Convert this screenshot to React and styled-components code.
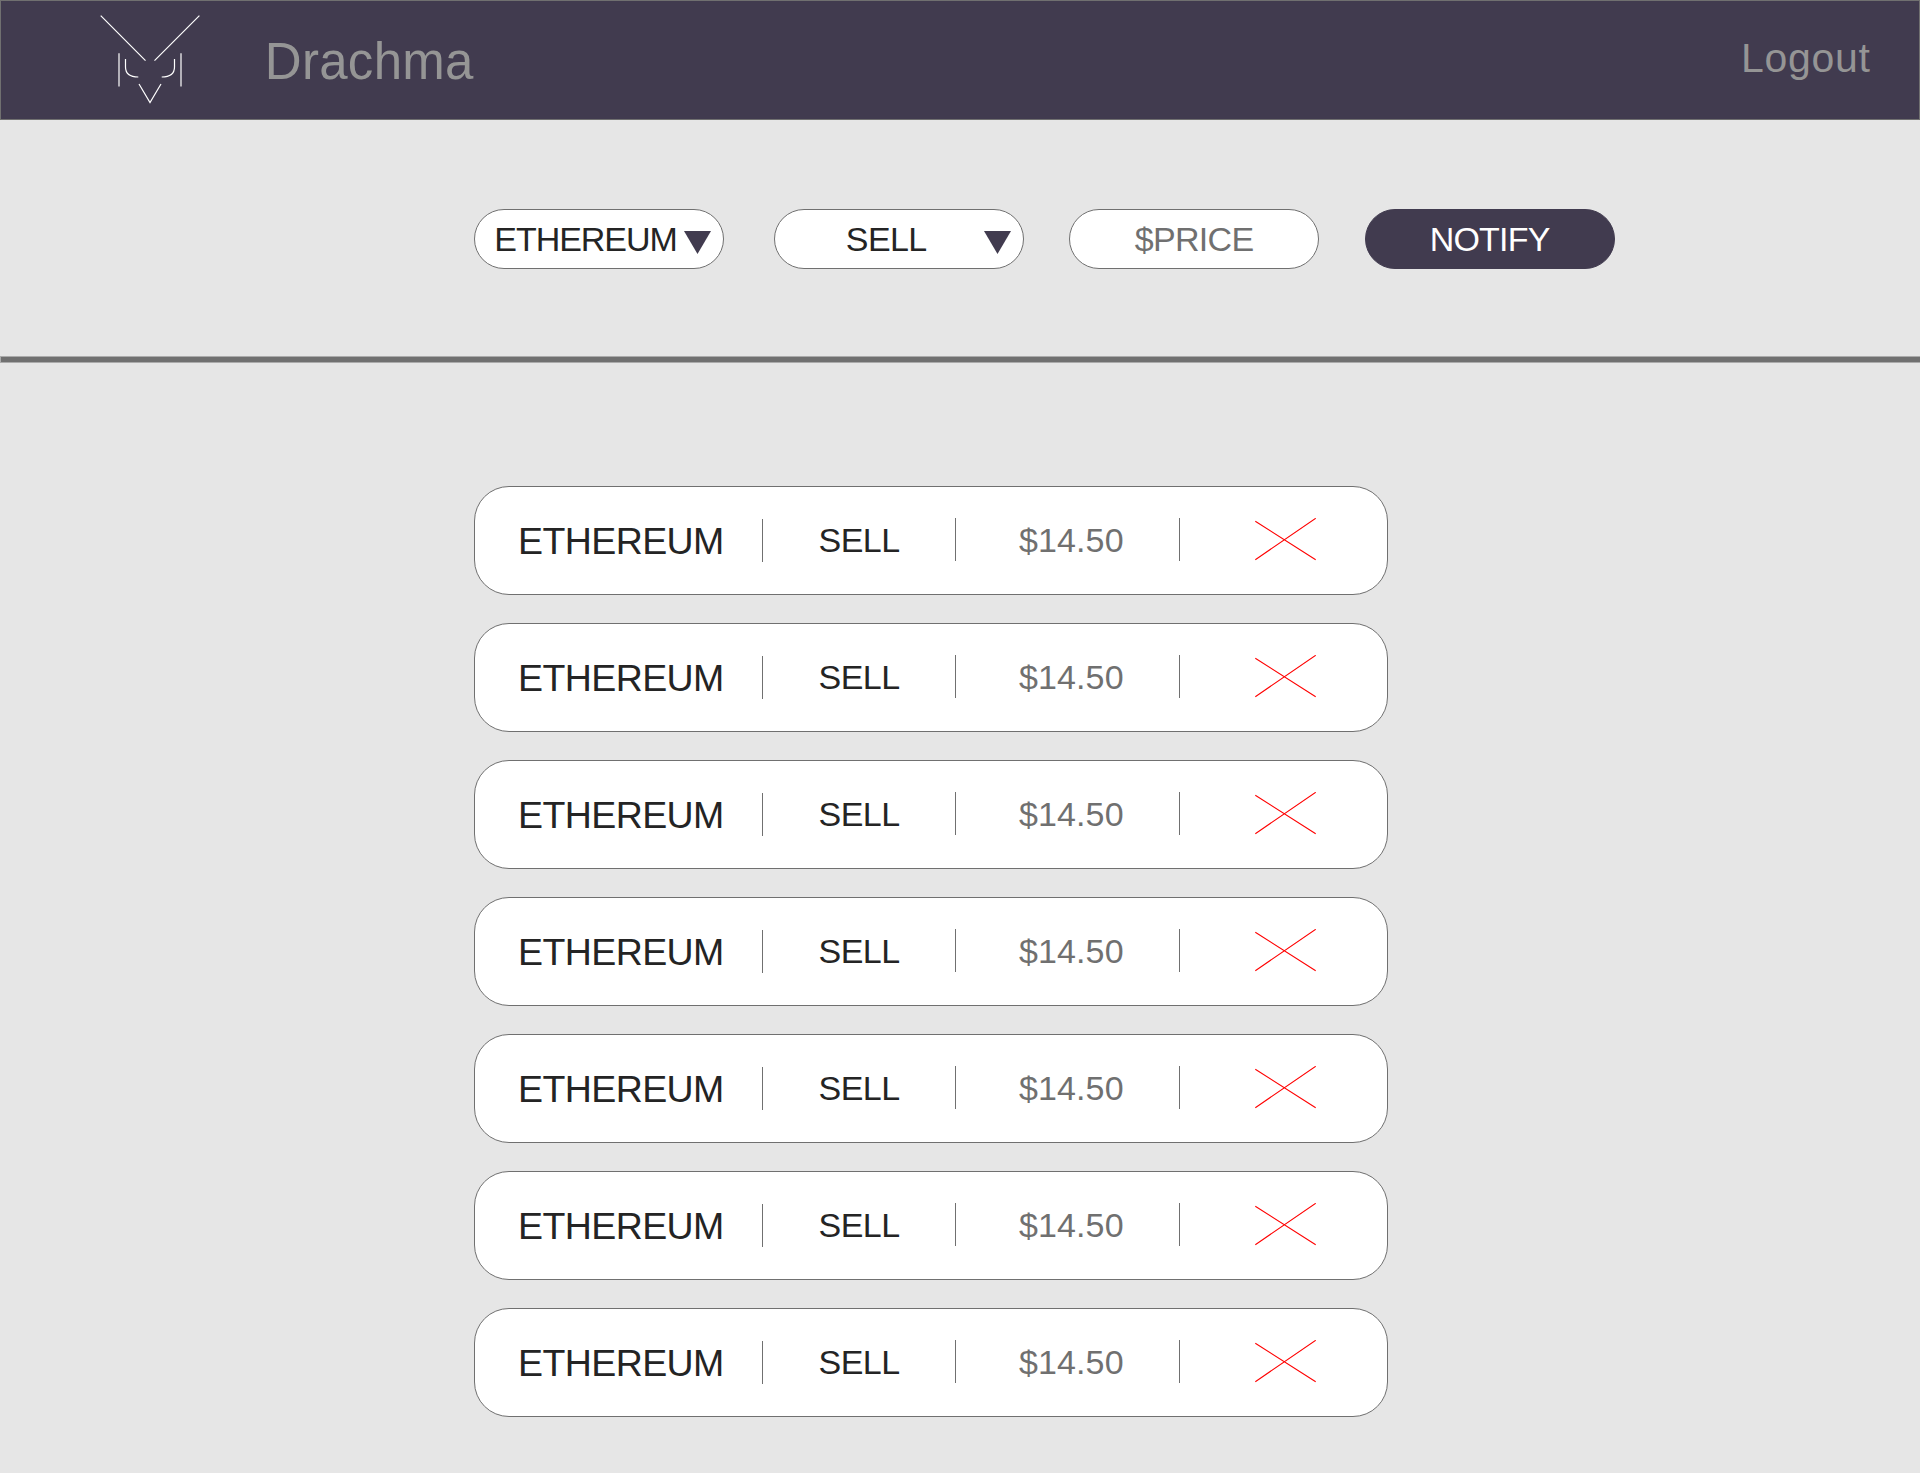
import React from "react";
import styled, { createGlobalStyle } from "styled-components";

const GlobalStyle = createGlobalStyle`
  *, *::before, *::after { box-sizing: border-box; }
  body {
    margin: 0;
    background: #e6e6e6;
    font-family: "Liberation Sans", Arial, sans-serif;
    color: #242424;
  }
  button {
    margin: 0;
    font: inherit;
    text-align: left;
    cursor: pointer;
  }
`;

const Page = styled.div`
  min-height: 1473px;
  background: #e6e6e6;
`;

const Header = styled.header`
  display: flex;
  align-items: center;
  height: 120px;
  padding: 0 48.5px 0 99px;
  background: #413b4f;
  border: 1px solid #707070;
  color: #959595;
`;

const Logo = styled.svg`
  display: block;
  width: 100px;
  height: 90px;
  fill: none;
  stroke: #fff;
  stroke-width: 1.2;
`;

const Brand = styled.h1`
  margin: 3px 0 0 64.8px;
  font-size: 51px;
  font-weight: 400;
  line-height: 60px;
  letter-spacing: 0.3px;
`;

const Logout = styled.a`
  margin: 0 0 4px auto;
  font-size: 41px;
  line-height: 48px;
  letter-spacing: 0.7px;
`;

const AlertForm = styled.section`
  display: flex;
  align-items: flex-start;
  height: 236px;
  padding: 89px 0 0 474px;
`;

const Pill = styled.button`
  display: flex;
  align-items: center;
  flex: none;
  width: 250px;
  height: 60px;
  margin-right: ${(p) => p.$gap || 0}px;
  padding: 0 12px 0 ${(p) => p.$inset}px;
  border: 1px solid ${(p) => (p.$filled ? "#413b4f" : "#707070")};
  border-radius: 30px;
  background: ${(p) => (p.$filled ? "#413b4f" : "#fff")};
  color: ${(p) => (p.$filled ? "#fff" : p.$muted ? "#707070" : "#242424")};
  font-size: 34px;
  line-height: 40px;
  letter-spacing: ${(p) => p.$tracking}px;
  white-space: nowrap;
`;

const Caret = styled.svg`
  display: block;
  flex: none;
  width: 27px;
  height: 23px;
  margin: 7px 0 0 auto;
  fill: #413b4f;
`;

const Rule = styled.hr`
  height: 7px;
  margin: 0;
  border: solid #abababff;
  border-width: 1px 0 1px 1px;
  background: #707070;
`;

const AlertList = styled.ul`
  display: flex;
  flex-direction: column;
  gap: 28px;
  margin: 0;
  padding: 123px 0 56px 474px;
  list-style: none;
`;

const AlertRow = styled.li`
  display: grid;
  grid-template-columns: 288px 193px 224px 1fr;
  align-items: start;
  width: 914px;
  height: 109px;
  border: 1px solid #707070;
  border-radius: 35px;
  background: #fff;
`;

const Cell = styled.div`
  display: flex;
  align-items: flex-start;
  justify-content: space-between;
  margin-top: ${(p) => p.$top}px;
  padding-left: ${(p) => p.$inset}px;
  color: ${(p) => (p.$muted ? "#707070" : "#242424")};
  font-size: ${(p) => p.$size || 34}px;
  line-height: 44px;
  letter-spacing: ${(p) => p.$tracking}px;
  white-space: nowrap;

  &::after {
    content: "";
    width: 1px;
    height: 43px;
    background: #707070;
  }
`;

const RemoveButton = styled.button`
  display: block;
  width: 62px;
  height: 43px;
  margin: 31px 0 0 75px;
  padding: 0;
  border: 0;
  background: none;
`;

const Cross = styled.svg`
  display: block;
  width: 62px;
  height: 43px;
  stroke: #ff0000;
  stroke-width: 1.1;
`;

const alerts = Array.from({ length: 7 }, (_, id) => ({
  id,
  coin: "ETHEREUM",
  action: "SELL",
  price: "$14.50",
}));

function OwlLogo() {
  return (
    <Logo viewBox="100 15 100 90" aria-hidden="true">
      <path d="M100.7 15.7 L145.5 60.7 M199.4 15.7 L154.5 60.7" />
      <path d="M119 53.3 V86.6 M181 53.3 V86.6" />
      <path d="M125.5 59 V67 Q125.5 77 138.3 77 M174.5 59 V67 Q174.5 77 161.7 77" />
      <path d="M139 84 L150 102.6 L161 84" />
    </Logo>
  );
}

function DownCaret() {
  return (
    <Caret viewBox="0 0 27 23" aria-hidden="true">
      <path d="M0 0 H27 L13.5 23 Z" />
    </Caret>
  );
}

export default function App() {
  return (
    <Page>
      <GlobalStyle />
      <Header>
        <OwlLogo />
        <Brand>Drachma</Brand>
        <Logout>Logout</Logout>
      </Header>
      <AlertForm>
        <Pill $inset={19.3} $tracking={-1.05} $gap={50}>
          ETHEREUM
          <DownCaret />
        </Pill>
        <Pill $inset={70.8} $tracking={-0.57} $gap={45}>
          SELL
          <DownCaret />
        </Pill>
        <Pill $inset={64.8} $tracking={-0.7} $gap={46} $muted>
          $PRICE
        </Pill>
        <Pill $inset={63.7} $tracking={-0.8} $filled>
          NOTIFY
        </Pill>
      </AlertForm>
      <Rule />
      <AlertList>
        {alerts.map((alert) => (
          <AlertRow key={alert.id}>
            <Cell $inset={43.1} $size={37.5} $tracking={-0.6} $top={32}>
              {alert.coin}
            </Cell>
            <Cell $inset={55.6} $tracking={-0.57} $top={31}>
              {alert.action}
            </Cell>
            <Cell $inset={62.9} $tracking={0.14} $top={31} $muted>
              {alert.price}
            </Cell>
            <RemoveButton aria-label="Remove alert">
              <Cross viewBox="0 0 62 43">
                <path d="M0.3 3.3 L60.7 41.7 M0.3 41.7 L60.7 0.3" />
              </Cross>
            </RemoveButton>
          </AlertRow>
        ))}
      </AlertList>
    </Page>
  );
}
